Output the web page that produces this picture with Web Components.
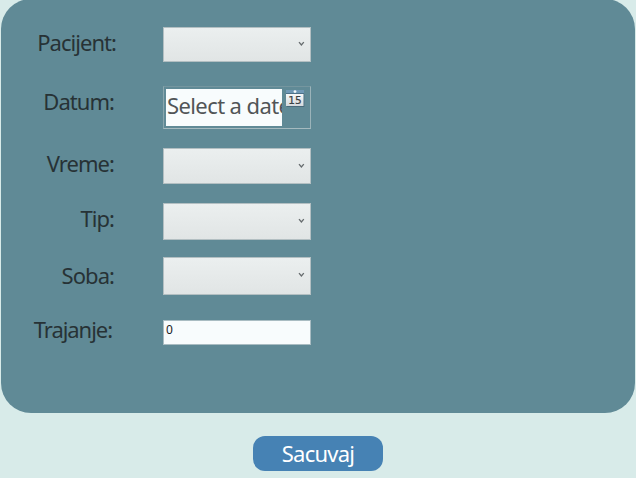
<!DOCTYPE html>
<html lang="sr">
<head>
<meta charset="utf-8">
<title>Termin</title>
<style>
html, body { margin: 0; height: 100%; overflow: hidden; background: #d8ebe9; font-family: "Noto Sans", "Open Sans", sans-serif; }
</style>
</head>
<body>
<appointment-page></appointment-page>
<script>
const define = (name, html) => customElements.define(name, class extends HTMLElement {
  constructor() {
    super();
    const t = document.createElement('template');
    t.innerHTML = html;
    this.attachShadow({ mode: 'open' }).append(t.content.cloneNode(true));
  }
});

define('combo-box', `
<style>
:host { display: flex; box-sizing: border-box; width: 148px; height: 100%; justify-content: flex-end; align-items: center;
  padding: 0 5px var(--lift, 0) 0; border: 1px solid #b3bfc2; background: linear-gradient(#ebefef, #e1e5e5); }
svg { display: block; }
</style>
<svg width="7" height="6" viewBox="0 0 7 6"><path d="M1 1.1 3.4 4 5.8 1.1" fill="none" stroke="#666c6e" stroke-width="1.3"/></svg>`);

define('date-picker', `
<style>
:host { display: flex; box-sizing: border-box; width: 148px; height: 100%; padding: 2px; border: 1px solid; border-color: #75969f #9bb3b9 #a5babf #8ba7ae; gap: 4px; }
.value { flex: none; box-sizing: border-box; width: 116px; height: 37px; padding-left: 1px; overflow: hidden; background: #f8fcfd;
  color: #515557; font-size: 22px; line-height: 33px; white-space: nowrap; letter-spacing: -.6px; }
svg { display: block; flex: none; }
text { font: 10px "DejaVu Sans", sans-serif; }
</style>
<div class="value"><slot></slot></div>
<svg width="19" height="19" viewBox="0 0 19 19">
<defs><linearGradient id="g" x2="0" y2="1"><stop stop-color="#f6f8f8"/><stop offset="1" stop-color="#d5dadd"/></linearGradient></defs>
<rect x=".7" y="5" width="17.6" height="13" fill="#496b7c"/>
<rect x="0" y="1" width="18" height="4" fill="#7099b6"/>
<rect x="0" y="4" width="18" height="1" fill="#4c7189"/>
<circle cx="9" cy="2.6" r="1.4" fill="#f0f7fa"/>
<rect x="0" y="5" width="17.5" height="12" fill="url(#g)"/>
<text x="2.2" y="15" textLength="13.4" lengthAdjust="spacingAndGlyphs" fill="#3a4144" stroke="#3a4144" stroke-width=".2">15</text>
</svg>`);

define('text-field', `
<style>
:host { display: block; box-sizing: border-box; width: 148px; height: 100%; padding-left: 2px; border: 1px solid #a9bcc2;
  background: #f8fcfd; color: #1c2225; font-size: 12px; line-height: 18px; }
</style>
<slot></slot>`);

define('form-row', `
<style>
:host { display: grid; grid-template-columns: 117px 148px; column-gap: 45px; height: var(--h); margin-top: var(--gap); }
.label { justify-self: end; height: 30px; margin: var(--dy, 0) var(--dx, 4px) 0 0; color: #273235; font-size: 22px; line-height: 30px;
  white-space: nowrap; letter-spacing: var(--ls, -.95px); }
.field { height: var(--h); }
</style>
<div class="label"><slot name="label"></slot></div>
<div class="field"><slot></slot></div>`);

define('form-panel', `
<style>
:host { display: flow-root; box-sizing: border-box; height: 414px; margin: -1px 1px 0; border-radius: 30px; background: #608a96; }
</style>
<slot></slot>`);

define('action-button', `
<style>
:host { display: block; width: 130px; height: 35px; border-radius: 12px; background: #4682b4; color: #fff; font-size: 22px;
  line-height: 35px; text-align: center; letter-spacing: -.75px; }
</style>
<slot></slot>`);

define('appointment-page', `
<style>
:host { display: flex; flex-direction: column; height: 478px; }
action-button { align-self: center; margin-top: 23px; }
</style>
<form-panel>
<form-row style="--h:35px;--gap:28px;--dy:0px;--dx:2px;--lift:2px"><span slot="label">Pacijent:</span><combo-box></combo-box></form-row>
<form-row style="--h:43px;--gap:24px;--dy:0px"><span slot="label">Datum:</span><date-picker>Select a date</date-picker></form-row>
<form-row style="--h:36px;--gap:19px"><span slot="label">Vreme:</span><combo-box></combo-box></form-row>
<form-row style="--h:37px;--gap:19px;--lift:1px"><span slot="label">Tip:</span><combo-box></combo-box></form-row>
<form-row style="--h:38px;--gap:17px;--dy:3px;--lift:2px"><span slot="label">Soba:</span><combo-box></combo-box></form-row>
<form-row style="--h:25px;--gap:25px;--dy:-6px;--dx:6px;--ls:-1.05px"><span slot="label">Trajanje:</span><text-field>0</text-field></form-row>
</form-panel>
<action-button>Sacuvaj</action-button>`);
</script>
</body>
</html>
